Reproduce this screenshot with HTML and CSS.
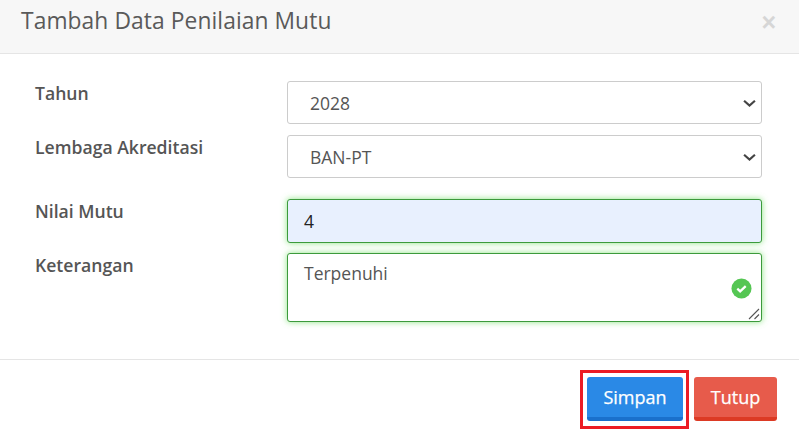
FILE: index.html
```html
<!DOCTYPE html>
<html lang="id">
<head>
<meta charset="utf-8">
<title>Tambah Data Penilaian Mutu</title>
<link rel="stylesheet" href="styles.css">
</head>
<body>
<div class="modal">
  <header class="modal-header">
    <h4 class="modal-title">Tambah Data Penilaian Mutu</h4>
    <button class="close" type="button">&times;</button>
  </header>
  <form class="modal-body">
    <div class="row row-a">
      <label class="label">Tahun</label>
      <div class="field">
        <div class="control select"><span>2028</span>
          <svg class="chevron" viewBox="0 0 12 8"><path d="M1 1.5 L6 6 L11 1.5" /></svg>
        </div>
      </div>
    </div>
    <div class="row row-b">
      <label class="label">Lembaga Akreditasi</label>
      <div class="field">
        <div class="control select"><span>BAN-PT</span>
          <svg class="chevron" viewBox="0 0 12 8"><path d="M1 1.5 L6 6 L11 1.5" /></svg>
        </div>
      </div>
    </div>
    <div class="row row-c">
      <label class="label">Nilai Mutu</label>
      <div class="field">
        <div class="control valid filled">4</div>
      </div>
    </div>
    <div class="row row-d">
      <label class="label">Keterangan</label>
      <div class="field">
        <div class="control valid area">Terpenuhi
          <svg class="ok" viewBox="0 0 22 22"><circle cx="11" cy="11" r="10.5" fill="#55c653"/><path d="M6.6 11.2 L9.6 14 L15.4 8.6" fill="none" stroke="#fff" stroke-width="2.4"/></svg>
          <svg class="grip" viewBox="0 0 12 12"><path d="M1 11 L11 1 M6.5 11 L11 6.5" fill="none" stroke="#555" stroke-width="1.1"/></svg>
        </div>
      </div>
    </div>
  </form>
  <footer class="modal-footer">
    <span class="highlight"><button class="btn btn-primary" type="button">Simpan</button></span>
    <button class="btn btn-danger" type="button">Tutup</button>
  </footer>
</div>
</body>
</html>
```
FILE: styles.css
```css
* { box-sizing: border-box; }
html, body { margin: 0; padding: 0; background: #fff; }
body { width: 799px; height: 433px; overflow: hidden; font-family: "Open Sans", sans-serif; color: #555; }
.modal { display: flex; flex-direction: column; height: 433px; }
.modal-header {
  height: 54px; background: #f7f7f7; border-bottom: 1px solid #e5e5e5;
  display: flex; justify-content: space-between; align-items: flex-start;
  padding: 4px 23px 0 21px;
}
.modal-title { margin: 0; font-size: 22.8px; line-height: 34px; font-weight: 400; color: #5a5a5a; letter-spacing: .08px; }
.close { border: 0; background: none; padding: 0; margin-top: 3px; font-family: "Liberation Sans", sans-serif; font-size: 25px; line-height: 30px; font-weight: 700; color: #d6d6d6; }
.modal-body { padding: 27px 37px 0 35px; height: 306px; border-bottom: 1px solid #e5e5e5; display: flex; flex-direction: column; }
.row { display: flex; }
.row-b { margin-top: 11px; }
.row-c { margin-top: 21px; }
.row-d { margin-top: 10px; }
.label { width: 252px; font-size: 17.6px; line-height: 24px; font-weight: 600; color: #555; }
.field { flex: 1; }
.control {
  position: relative; height: 43px; border: 1px solid #ccc; border-radius: 3px;
  font-size: 17.5px; line-height: 43px; padding-left: 22px; color: #555; background: #fff;
}
.select { height: 43px; }
.chevron { position: absolute; right: 5px; top: 17px; width: 13px; height: 9px; }
.chevron path { fill: none; stroke: #444; stroke-width: 2; }
.valid { border-color: #3c9a3c; box-shadow: 0 0 6px rgba(92, 220, 80, .7); padding-left: 16px; }
.filled { background: #e8f0fe; color: #222; height: 44px; line-height: 43px; }
.area { height: 69px; line-height: 24px; padding-top: 7px; }
.ok { position: absolute; right: 9px; top: 24px; width: 21px; height: 21px; }
.grip { position: absolute; right: 1px; bottom: 1px; width: 12px; height: 12px; }
.modal-footer { display: flex; justify-content: flex-end; align-items: flex-start; padding: 10px 22px 0 0; gap: 5px; }
.highlight { display: block; border: 3px solid #ec1c24; padding: 4px 3px 4px 4px; height: 59px; }
.btn {
  display: block; height: 44px; margin-top: 0; border: 0; border-bottom: 4px solid; border-radius: 3px;
  font-family: "Open Sans", sans-serif; font-size: 18px; font-weight: 400; -webkit-text-stroke: .25px #fff; color: #fff; padding: 0;
}
.btn-primary { width: 96px; background: #2a89e6; border-color: #1a70cc; }
.btn-danger { width: 83px; margin-top: 7px; background: #e75b4b; border-color: #dc3a24; }
```
